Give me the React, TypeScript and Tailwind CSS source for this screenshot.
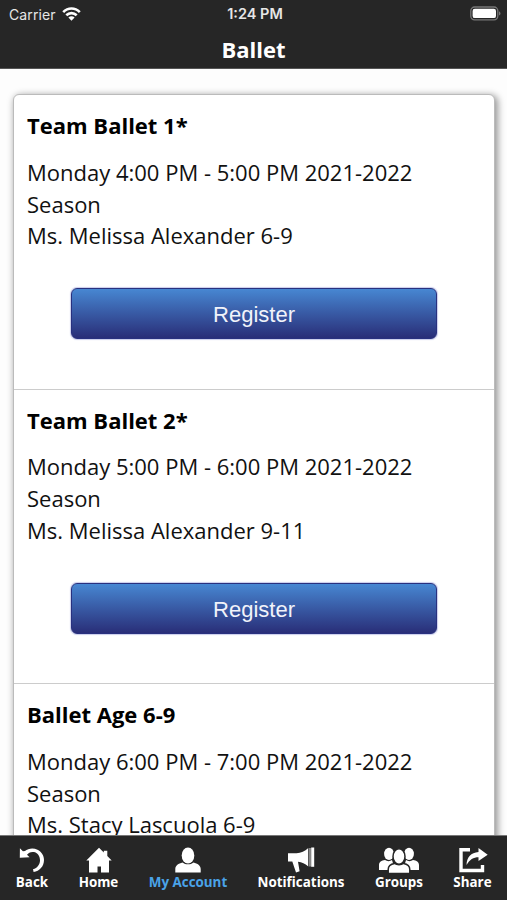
type ClassItem = {
  id: number;
  title: string;
  time: string;
  teacher: string;
};

type Tab = {
  label: string;
  icon: React.ReactNode;
  className: string;
  active?: boolean;
};

const classes: ClassItem[] = [
  {
    id: 1,
    title: 'Team Ballet 1*',
    time: 'Monday 4:00 PM - 5:00 PM 2021-2022 Season',
    teacher: 'Ms. Melissa Alexander 6-9',
  },
  {
    id: 2,
    title: 'Team Ballet 2*',
    time: 'Monday 5:00 PM - 6:00 PM 2021-2022 Season',
    teacher: 'Ms. Melissa Alexander 9-11',
  },
  {
    id: 3,
    title: 'Ballet Age 6-9',
    time: 'Monday 6:00 PM - 7:00 PM 2021-2022 Season',
    teacher: 'Ms. Stacy Lascuola 6-9',
  },
];

const tabs: Tab[] = [
  {
    label: 'Back',
    className: 'w-[64px]',
    icon: (
      <svg width="26" height="26" viewBox="0 0 26 26">
        <path
          d="M6 4C9 1.500 14 .5 18.500 2.700C22.500 4.700 25 8.500 25 12.900C25 19.500 20.500 23.800 14.600 25L14 22.300C18.500 20.800 21 17.500 21 13.200C21 9 18.500 5.600 14.800 5C11.500 4.600 9.500 5.800 8 7.800L10.600 10.300L.8 10.800L.9 1.200L3.900 4.300Z"
          fill="white"
        />
      </svg>
    ),
  },
  {
    label: 'Home',
    className: 'w-[69px]',
    icon: (
      <svg width="26" height="26" viewBox="0 0 26 26">
        <path
          d="M13 .8L17.800 5.400V3.800H21.300V8.900L25.700 13.500H23V25.500H15V19.500H11.500V25.500H3V13.500H.3Z"
          fill="white"
        />
      </svg>
    ),
  },
  {
    label: 'My Account',
    className: 'w-[110px]',
    active: true,
    icon: (
      <svg width="26" height="26" viewBox="0 0 26 26">
        <ellipse cx="13" cy="8.500" rx="6.300" ry="8" fill="white" />
        <path
          d="M.3 25.600V22C.3 18.500 3.500 16.300 7.500 15.400C10.500 18 15.500 18 18.500 15.400C22.500 16.300 25.700 18.500 25.700 22V25.600Z"
          fill="white"
        />
      </svg>
    ),
  },
  {
    label: 'Notifications',
    className: 'w-[116px]',
    icon: (
      <svg width="28" height="26" viewBox="0 0 28 26">
        <path
          d="M1 6.200H9.500C14 6 18 4 21 1.200V19.200C18 16.700 15 15 11 14.700L12.600 24.300L9 25.500L5.300 14.500H1Z"
          fill="white"
        />
        <path d="M21.500 1H24.200V19.500H21.500Z" fill="#888" />
        <path d="M24.200 .5H27.200V19.800H24.200Z" fill="white" />
      </svg>
    ),
  },
  {
    label: 'Groups',
    className: 'w-[80px]',
    icon: (
      <svg width="42" height="26" viewBox="0 0 42 26">
        <g fill="white">
          <ellipse cx="11" cy="6.900" rx="4.900" ry="6.200" />
          <ellipse cx="31" cy="6.900" rx="4.900" ry="6.200" />
          <path d="M1 23V18C1 15 3.500 13.500 7 13C9 14.500 12 14.500 14 13L17 23Z" />
          <path d="M41 23V18C41 15 38.500 13.500 35 13C33 14.500 30 14.500 28 13L25 23Z" />
        </g>
        <g fill="white" stroke="#262626" strokeWidth="1.500">
          <path d="M10.200 26.500V22.500C10.200 18.800 13 17 16.500 16.500C19 18.200 23 18.200 25.500 16.500C29 17 31.800 18.800 31.800 22.500V26.500Z" />
          <ellipse cx="21" cy="9.500" rx="6" ry="7.700" />
        </g>
      </svg>
    ),
  },
  {
    label: 'Share',
    className: 'w-[67px]',
    icon: (
      <svg width="30" height="26" viewBox="0 0 30 26">
        <path
          d="M12 2.700H3V23.500H24.500V18"
          fill="none"
          stroke="white"
          strokeWidth="3.400"
        />
        <path
          d="M8.500 18C8.800 10 13 5.500 20.500 4.900V1L29.700 7.800L20.500 14V10.200C15.500 10.200 11.500 12.500 8.500 18Z"
          fill="white"
        />
      </svg>
    ),
  },
];

const StatusBar: React.FC = () => {
  return (
    <div className="grid h-7 grid-cols-3 items-center pr-[6px] pl-[9px] font-['Inter',sans-serif] text-[14px] text-[#e6e6e6]">
      <div className="flex items-center gap-[6px]">
        <span className="w-[47px] tracking-[0.1px]">Carrier</span>
        <svg width="19" height="15" viewBox="0 0 19 15">
          <g fill="none" stroke="white" strokeWidth="2.600">
            <path d="M1.200 5.200C6 .3 13 .3 17.800 5.200" />
            <path d="M4.300 8.300C7.300 5.400 11.700 5.400 14.700 8.300" />
          </g>
          <path d="M6.400 10.500C8.200 8.800 10.800 8.800 12.600 10.500L9.500 13.700Z" fill="white" />
        </svg>
      </div>
      <div className="text-center text-[14.500px] font-semibold whitespace-nowrap">
        1:24 PM
      </div>
      <div className="flex justify-end pb-[2px]">
        <svg width="31" height="15" viewBox="0 0 31 15">
          <rect x=".8" y="1" width="27" height="12.800" rx="3.800" fill="none" stroke="#777" strokeWidth="1.300" />
          <rect x="2.600" y="2.700" width="23.400" height="9.400" rx="2.200" fill="white" />
          <path d="M29 5.200C31 6 31 8.800 29 9.600Z" fill="#777" />
        </svg>
      </div>
    </div>
  );
};

const App: React.FC = () => {
  return (
    <div className="flex h-[900px] w-[507px] flex-col overflow-hidden bg-white font-['Open_Sans',sans-serif]">
      <header className="h-[69px] shrink-0 border-b border-[#555] bg-[#262626]">
        <StatusBar />
        <h1 className="text-center text-[22px] leading-[43px] font-bold text-white">
          Ballet
        </h1>
      </header>
      <main className="min-h-0 flex-1 overflow-hidden bg-[#fdfdfd] pt-[25px] pr-3 pl-[13px]">
        <div className="rounded-[6px] border border-[#bbb] bg-white shadow-[2px_2px_7px_1px_rgba(0,0,0,0.4)]">
          {classes.map((item) => (
            <section
              key={item.id}
              className="h-[294.500px] border-b border-[#ccc] px-[13px] pt-[15px] text-[22px] leading-[31.750px] text-[#111]"
            >
              <h2 className="font-bold text-black">{item.title}</h2>
              <p className="mt-[15px]">{item.time}</p>
              <p>{item.teacher}</p>
              <button className="mx-auto mt-9 block h-[51px] w-[366px] rounded-[6px] border border-[#29317f] bg-linear-to-b from-[#4787d2] to-[#292e78] pt-[3px] font-['Liberation_Sans',sans-serif] text-[22px] text-[#f1f3fa] shadow-[0_0_1px_1px_#c9cdec]">
                Register
              </button>
            </section>
          ))}
        </div>
      </main>
      <nav className="z-10 flex h-[65px] shrink-0 border-t border-[#777] bg-[#262626]">
        {tabs.map((tab) => (
          <div
            key={tab.label}
            className={`flex shrink-0 flex-col items-center pt-[11px] text-[13.400px] leading-[18px] font-bold whitespace-nowrap ${tab.className} ${tab.active ? 'text-[#4aa3e8]' : 'text-white'}`}
          >
            {tab.icon}
            <span>{tab.label}</span>
          </div>
        ))}
      </nav>
    </div>
  );
};
export default App;
